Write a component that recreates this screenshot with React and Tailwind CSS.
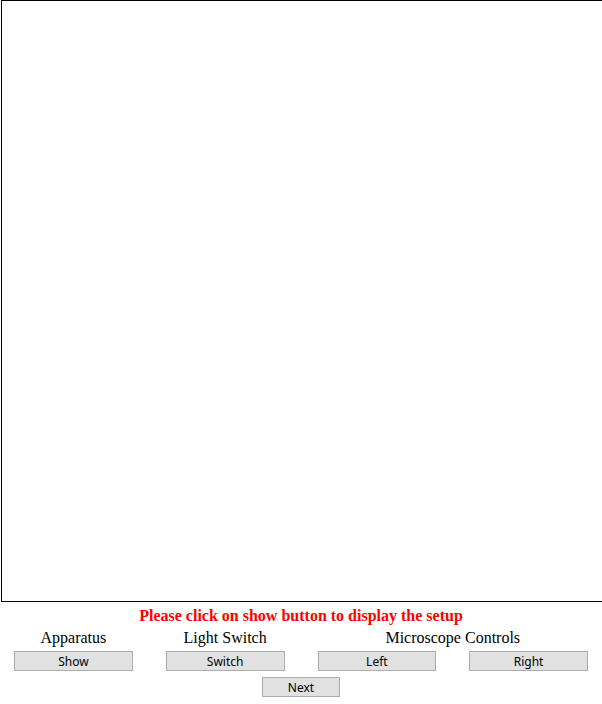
function ControlButton({ children, className = "w-full" }) {
  return (
    <button
      type="button"
      className={`flex h-5 items-center justify-center border border-[#adadad] bg-[#e1e1e1] pt-0.5 font-['Noto_Sans',sans-serif] text-[12px] leading-4 text-black hover:bg-[#e5f1fb] ${className}`}
    >
      {children}
    </button>
  );
}

export default function App() {
  return (
    <main className="overflow-hidden bg-white font-['Liberation_Serif',serif] text-base leading-5 text-black">
      <div className="flex aspect-square w-full pl-px">
        <canvas
          aria-label="Experiment setup"
          className="min-w-0 flex-1 border-y border-l border-black"
        />
      </div>
      <p className="pt-1 text-center font-bold text-[#ff0000]">
        Please click on show button to display the setup
      </p>
      <div className="grid grid-cols-4 gap-x-[33px] px-3.5 pt-0.5 text-center">
        <span>Apparatus</span>
        <span>Light Switch</span>
        <span className="col-span-2">Microscope Controls</span>
      </div>
      <div className="grid grid-cols-4 gap-x-[33px] px-3.5 pt-[3px]">
        <ControlButton>Show</ControlButton>
        <ControlButton>Switch</ControlButton>
        <ControlButton>Left</ControlButton>
        <ControlButton>Right</ControlButton>
      </div>
      <div className="flex justify-center pt-1.5">
        <ControlButton className="w-[78px]">Next</ControlButton>
      </div>
    </main>
  );
}
